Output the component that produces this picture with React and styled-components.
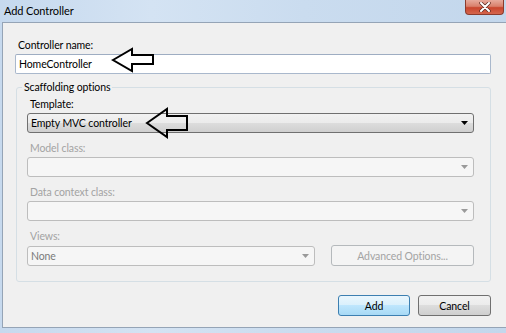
import styled, { createGlobalStyle } from "styled-components";

const GlobalStyle = createGlobalStyle`
  body {
    margin: 0;
    background: #ffffff;
    font-family: Lato, "Liberation Sans", sans-serif;
    letter-spacing: -0.1px;
    overflow: hidden;
  }
`;

const Window = styled.div`
  position: relative;
  width: 506px;
  height: 333px;
  display: flex;
  flex-direction: column;
  background: linear-gradient(90deg, #c6d9ee 0%, #d4e3f3 30%, #cadcef 60%, #c3d7ec 100%);
  box-sizing: border-box;
`;

const TitleBar = styled.div`
  height: 22px;
  display: flex;
  justify-content: space-between;
  align-items: flex-start;
  padding-left: 4px;
`;

const Title = styled.div`
  font-size: 11px;
  line-height: 22px;
  color: #000;
`;

const CloseButton = styled.div`
  width: 39px;
  height: 15px;
  margin-right: 2px;
  box-sizing: border-box;
  border: 1px solid #8b3b2d;
  border-top: none;
  border-radius: 0 0 4px 4px;
  background: linear-gradient(#e7aa9c 0%, #d9806c 45%, #c9452d 55%, #d4664d 100%);
  display: flex;
  align-items: center;
  justify-content: center;
`;

const Frame = styled.div`
  flex: 1;
  display: flex;
  padding: 0 3px 5px 2px;
`;

const Client = styled.div`
  flex: 1;
  display: flex;
  flex-direction: column;
  background: #f0f0f0;
  border: 1px solid #95a4b6;
  padding: 14px 15px 0 12px;
`;

const Label = styled.div`
  font-size: 10.5px;
  line-height: 16px;
  margin: 0 0 1px 3px;
  color: ${(p) => (p.disabled ? "#a3a3a3" : "#000")};
`;

const TextBox = styled.div`
  height: 20px;
  box-sizing: border-box;
  border: 1px solid #a9b8cc;
  border-top-color: #9eadc2;
  border-radius: 2px;
  background: #fff;
  font-size: 10.5px;
  line-height: 18px;
  padding-left: 3px;
  color: #000;
`;

const Group = styled.fieldset`
  margin: 6px 0 0 1px;
  padding: 2px 16px 15px 10px;
  border: 1px solid #d5dfe5;
  border-radius: 3px;
  display: flex;
  flex-direction: column;
  gap: 7px;
  min-width: 0;
`;

const Legend = styled.legend`
  font-size: 10.5px;
  line-height: 14px;
  padding: 0 2px;
  margin-left: -5px;
  color: #000;
`;

const Field = styled.div`
  display: flex;
  flex-direction: column;
`;

const Select = styled.div`
  height: 20px;
  width: ${(p) => p.width || "auto"};
  box-sizing: border-box;
  display: flex;
  align-items: center;
  justify-content: space-between;
  padding: 0 5px 0 3px;
  border-radius: 3px;
  font-size: 10.5px;
  border: 1px solid ${(p) => (p.disabled ? "#bdbdbd" : "#707070")};
  background: ${(p) =>
    p.disabled
      ? "#f6f6f6"
      : "linear-gradient(#f2f2f2 0%, #ebebeb 50%, #dddddd 50%, #cfcfcf 100%)"};
  color: ${(p) => (p.disabled ? "#7a7a7a" : "#000")};
`;

const Row = styled.div`
  display: flex;
  gap: 16px;
  align-items: center;
`;

const Button = styled.div`
  width: ${(p) => p.width}px;
  height: 21px;
  box-sizing: border-box;
  display: flex;
  align-items: center;
  justify-content: center;
  font-size: 10.5px;
  border-radius: 3px;
  border: 1px solid
    ${(p) => (p.primary ? "#3c7fb1" : p.disabled ? "#b5b9bc" : "#707070")};
  background: ${(p) =>
    p.primary
      ? "linear-gradient(#eaf6fd 0%, #d9f0fc 50%, #bee6fd 50%, #a7d9f5 100%)"
      : p.disabled
      ? "#f4f4f4"
      : "linear-gradient(#f2f2f2 0%, #ebebeb 50%, #dddddd 50%, #cfcfcf 100%)"};
  color: ${(p) => (p.disabled ? "#a3a3a3" : "#000")};
`;

const ButtonBar = styled.div`
  display: flex;
  justify-content: flex-end;
  gap: 8px;
  margin-top: 13px;
`;

const Callout = styled.svg`
  position: absolute;
  left: ${(p) => p.x}px;
  top: ${(p) => p.y}px;
  overflow: visible;
`;

const DropArrow = ({ disabled }) => (
  <svg width="7" height="4" viewBox="0 0 7 4">
    <polygon points="0,0 7,0 3.5,4" fill={disabled ? "#9a9a9a" : "#000"} />
  </svg>
);

export default function App() {
  return (
    <>
      <GlobalStyle />
      <Window>
        <TitleBar>
          <Title>Add Controller</Title>
          <CloseButton>
            <svg width="12" height="10" viewBox="0 0 12 10">
              <path d="M2 1 L10 9 M10 1 L2 9" stroke="#5a2a22" strokeWidth="3.4" strokeLinecap="round" />
              <path d="M2 1 L10 9 M10 1 L2 9" stroke="#ffffff" strokeWidth="2" strokeLinecap="round" />
            </svg>
          </CloseButton>
        </TitleBar>
        <Frame>
          <Client>
            <Label>Controller name:</Label>
            <TextBox>HomeController</TextBox>
            <Group>
              <Legend>Scaffolding options</Legend>
              <Field>
                <Label>Template:</Label>
                <Select>
                  Empty MVC controller
                  <DropArrow />
                </Select>
              </Field>
              <Field>
                <Label disabled>Model class:</Label>
                <Select disabled>
                  <span />
                  <DropArrow disabled />
                </Select>
              </Field>
              <Field>
                <Label disabled>Data context class:</Label>
                <Select disabled>
                  <span />
                  <DropArrow disabled />
                </Select>
              </Field>
              <Field>
                <Label disabled>Views:</Label>
                <Row>
                  <Select disabled width="288px">
                    None
                    <DropArrow disabled />
                  </Select>
                  <Button disabled width={143}>
                    Advanced Options...
                  </Button>
                </Row>
              </Field>
            </Group>
            <ButtonBar>
              <Button primary width={72}>
                Add
              </Button>
              <Button width={73}>Cancel</Button>
            </ButtonBar>
          </Client>
        </Frame>
        <Callout x={110} y={47} width="46" height="27" viewBox="0 0 46 27">
          <polygon
            points="3,13 22,2 22,8 43,8 43,17 22,17 22,24"
            fill="#fff"
            stroke="#000"
            strokeWidth="2"
          />
        </Callout>
        <Callout x={144} y={107} width="46" height="33" viewBox="0 0 46 33">
          <polygon
            points="3,16 23,2 23,9 43,9 43,23 23,23 23,30"
            fill="none"
            stroke="#000"
            strokeWidth="2"
          />
        </Callout>
      </Window>
    </>
  );
}
